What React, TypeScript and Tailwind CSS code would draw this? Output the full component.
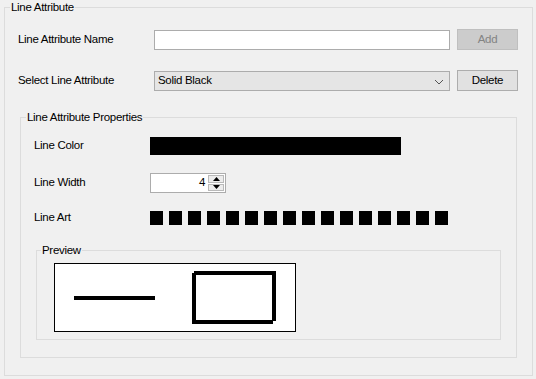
import React from "react";

// Group box in the WinForms style: a light border with the caption sitting on it
function GroupBox({
  title,
  className,
  legendLeft,
  children,
}: {
  title: string;
  className: string;
  legendLeft: string;
  children: React.ReactNode;
}) {
  return (
    <div className={["relative border border-[#dcdcdc]", className].join(" ")}>
      <span
        className={[
          "absolute top-[-9px] bg-[#f0f0f0] px-[1px] leading-[16px] text-black",
          legendLeft,
        ].join(" ")}
      >
        {title}
      </span>
      {children}
    </div>
  );
}

function Chevron() {
  return (
    <svg width="10" height="6" viewBox="0 0 10 6" className="mt-[2px] block">
      <polyline points="1,1 5,5 9,1" fill="none" stroke="#555555" strokeWidth="1" />
    </svg>
  );
}

function Spinner({ value }: { value: number }) {
  return (
    <div className="flex h-[20px] w-[76px] border border-[#acacac] bg-white">
      <div className="flex flex-1 items-center justify-end pr-[3px] text-black">
        {value}
      </div>
      <div className="flex w-[17px] flex-col gap-[1px] py-[1px] pr-[1px]">
        <div className="flex flex-1 items-center justify-center border border-[#b9b9b9] bg-[#ececec]">
          <svg width="7" height="4" viewBox="0 0 7 4" className="block">
            <polygon points="3.5,0 7,4 0,4" fill="#000" />
          </svg>
        </div>
        <div className="flex flex-1 items-center justify-center border border-[#b9b9b9] bg-[#ececec]">
          <svg width="7" height="4" viewBox="0 0 7 4" className="block">
            <polygon points="0,0 7,0 3.5,4" fill="#000" />
          </svg>
        </div>
      </div>
    </div>
  );
}

const dashCount = 16;

export default function App() {
  return (
    <div className="h-[379px] w-[536px] overflow-hidden bg-[#f0f0f0] pl-[4px] pt-[7px] font-['Liberation_Sans',Arial,sans-serif] text-[11.5px] tracking-[-0.3px] text-black">
      <GroupBox title="Line Attribute" className="h-[369px] w-[529px]" legendLeft="left-[5px]">
        <div className="flex flex-col">
          {/* name + add */}
          <div className="ml-[13px] mt-[21px] flex h-[21px] items-center">
            <div className="w-[136px]">Line Attribute Name</div>
            <input
              type="text"
              className="h-[20px] w-[296px] border border-[#acacac] bg-white px-[3px] outline-none"
            />
            <button
              type="button"
              disabled
              className="ml-[7px] h-[21px] w-[61px] border border-[#bfbfbf] bg-[#cccccc] text-[#838383]"
            >
              Add
            </button>
          </div>

          {/* select + delete */}
          <div className="ml-[13px] mt-[20px] flex h-[21px] items-center">
            <div className="w-[136px]">Select Line Attribute</div>
            <div className="flex h-[20px] w-[296px] items-center justify-between border border-[#acacac] bg-[#e5e5e5] pl-[3px] pr-[5px]">
              <span>Solid Black</span>
              <Chevron />
            </div>
            <button
              type="button"
              className="ml-[7px] h-[21px] w-[61px] border border-[#adadad] bg-[#e1e1e1] text-black"
            >
              Delete
            </button>
          </div>

          {/* properties */}
          <GroupBox
            title="Line Attribute Properties"
            className="ml-[15px] mt-[26px] h-[241px] w-[497px]"
            legendLeft="left-[5px]"
          >
            <div className="flex flex-col">
              <div className="ml-[13px] mt-[19px] flex h-[18px] items-center">
                <div className="w-[116px]">Line Color</div>
                <div className="h-[18px] w-[251px] bg-black" />
              </div>

              <div className="ml-[13px] mt-[18px] flex h-[20px] items-center">
                <div className="w-[116px]">Line Width</div>
                <Spinner value={4} />
              </div>

              <div className="ml-[13px] mt-[18px] flex h-[14px] items-center">
                <div className="w-[116px]">Line Art</div>
                <div className="flex gap-[6px]">
                  {Array.from({ length: dashCount }).map((_, i) => (
                    <div key={i} className="h-[14px] w-[13px] bg-black" />
                  ))}
                </div>
              </div>

              <GroupBox
                title="Preview"
                className="ml-[15px] mt-[25px] h-[90px] w-[465px]"
                legendLeft="left-[4px]"
              >
                <div className="ml-[17px] mt-[12px] h-[69px] w-[242px] border border-black bg-white">
                  <svg width="240" height="67" viewBox="0 0 240 67" className="block">
                    <rect x="19" y="32" width="81" height="4" fill="#000" />
                    <rect x="139" y="7" width="82" height="4" fill="#000" />
                    <rect x="137" y="9" width="4" height="51" fill="#000" />
                    <rect x="137" y="56" width="81" height="4" fill="#000" />
                    <rect x="217" y="7" width="4" height="50" fill="#000" />
                  </svg>
                </div>
              </GroupBox>
            </div>
          </GroupBox>
        </div>
      </GroupBox>
    </div>
  );
}
